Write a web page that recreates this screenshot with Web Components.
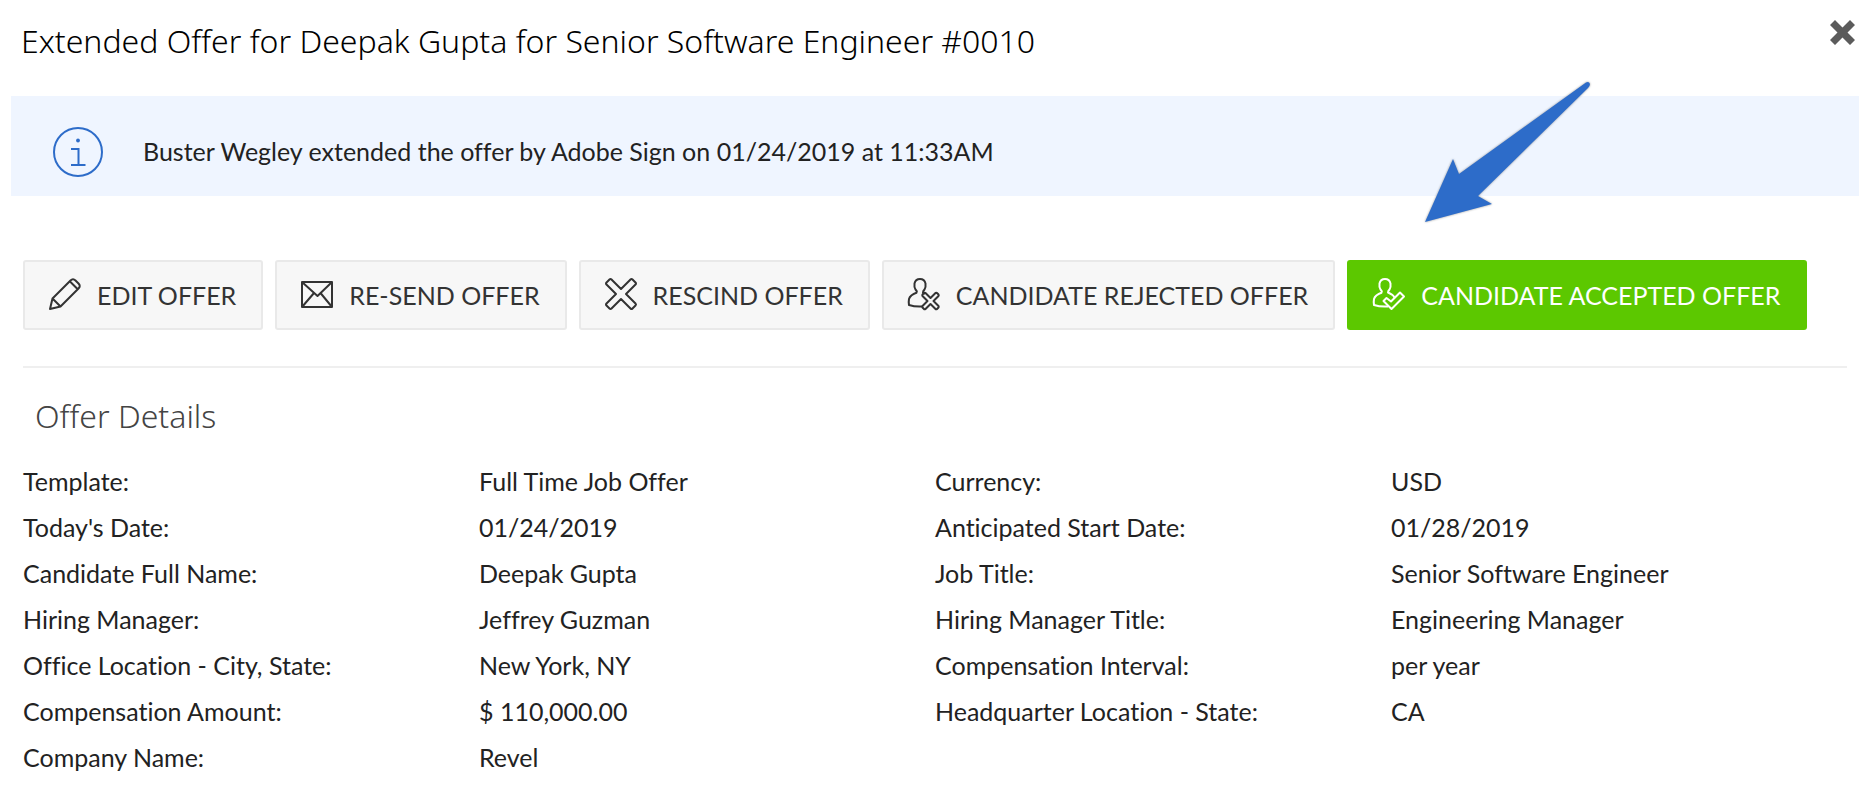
<!DOCTYPE html>
<html lang="en">
<head>
<meta charset="utf-8">
<title>Extended Offer</title>
<style>
  body {
    margin: 0;
    background: #fff;
    color: #222;
    font: 400 25px/46px Lato, "Liberation Sans", sans-serif;
    font-variant-ligatures: none;
  }
</style>
</head>
<body>
<offer-dialog>
  <span slot="title">Extended Offer for Deepak Gupta for Senior Software Engineer #0010</span>
  <info-banner>Buster Wegley extended the offer by Adobe Sign on 01/24/2019 at 11:33AM</info-banner>
  <action-bar>
    <action-button icon="pencil">EDIT OFFER</action-button>
    <action-button icon="envelope">RE-SEND OFFER</action-button>
    <action-button icon="cross">RESCIND OFFER</action-button>
    <action-button icon="person-cross">CANDIDATE REJECTED OFFER</action-button>
    <action-button icon="person-check" primary>CANDIDATE ACCEPTED OFFER</action-button>
  </action-bar>
  <detail-section>
    <span slot="heading">Offer Details</span>
    <detail-field label="Template:">Full Time Job Offer</detail-field>
    <detail-field label="Currency:">USD</detail-field>
    <detail-field label="Today's Date:">01/24/2019</detail-field>
    <detail-field label="Anticipated Start Date:">01/28/2019</detail-field>
    <detail-field label="Candidate Full Name:">Deepak Gupta</detail-field>
    <detail-field label="Job Title:">Senior Software Engineer</detail-field>
    <detail-field label="Hiring Manager:">Jeffrey Guzman</detail-field>
    <detail-field label="Hiring Manager Title:">Engineering Manager</detail-field>
    <detail-field label="Office Location - City, State:">New York, NY</detail-field>
    <detail-field label="Compensation Interval:">per year</detail-field>
    <detail-field label="Compensation Amount:">$ 110,000.00</detail-field>
    <detail-field label="Headquarter Location - State:">CA</detail-field>
    <detail-field label="Company Name:">Revel</detail-field>
  </detail-section>
  <pointer-arrow slot="pointer"></pointer-arrow>
</offer-dialog>

<script>
const define = (name, markup, setup) =>
  customElements.define(name, class extends HTMLElement {
    constructor() {
      super();
      this.attachShadow({ mode: 'open' });
    }
    connectedCallback() {
      this.shadowRoot.innerHTML = markup;
      if (setup) setup(this, this.shadowRoot);
    }
  });

define('offer-dialog', `
  <style>
    :host { display: block; position: relative; }
    header {
      display: flex; justify-content: space-between; align-items: flex-start;
      padding: 17px 13px 31px 21px;
    }
    h1 {
      margin: 0; color: #000;
      font: 300 32px/48px "Noto Sans", "Open Sans", sans-serif;
    }
    button { padding: 0; margin-top: 1px; border: 0; background: none; cursor: pointer; line-height: 0; }
    svg { width: 29px; height: 29px; fill: #5b5b5b; }
  </style>
  <header>
    <h1><slot name="title"></slot></h1>
    <button type="button" aria-label="Close">
      <svg viewBox="0 0 29 29"><path d="M7 2l7.500 7.500L22 2l5 5-7.500 7.500L27 22l-5 5-7.500-7.500L7 27l-5-5 7.500-7.500L2 7z"/></svg>
    </button>
  </header>
  <slot></slot>
  <slot name="pointer"></slot>
`);

define('info-banner', `
  <style>
    :host {
      display: flex; align-items: center; gap: 40px; min-height: 100px;
      margin: 0 11px; padding: 0 42px; box-sizing: border-box;
      background: #eff5ff;
    }
    svg { width: 50px; height: 50px; flex: none; margin-top: 12px; }
    p { margin: 10px 0 0; }
  </style>
  <svg viewBox="0 0 50 50" fill="none" stroke="#2d6cc9" stroke-width="2" aria-hidden="true">
    <circle cx="25" cy="25" r="24"/>
    <path d="M18 22h7.500V38M18 38h14.500"/>
    <circle cx="25" cy="13.500" r="1.900" fill="#2d6cc9" stroke="none"/>
  </svg>
  <p><slot></slot></p>
`);

define('action-bar', `
  <style>
    :host {
      display: flex; flex-wrap: wrap; gap: 12px;
      margin: 64px 23px 0; padding-bottom: 36px;
      border-bottom: 2px solid #efefef;
    }
  </style>
  <slot></slot>
`);

const PERSON = 'M9 14.500Q9 13 7.500 11.500Q6 9 6.500 5.500Q7.500 1 12 1Q16.500 1 17.500 5.500Q18 9 16.500 11.500Q15 13 15 14.500';
const ICONS = {
  pencil: '<path d="M1 31l2.500-10.500L21.500 2.500Q24 0 26.500 2.500L29.500 5.500Q32 8 29.500 10.500L11.500 28.500zM3.500 20.500l8 8M21 3.500l7.500 7.500"/>',
  envelope: '<path d="M1 4h30v25H1zM1 4l15.500 14L31 4M1 29l12-14M31 29L19.500 15"/>',
  cross: '<path d="M1.500 4.500L4.500 1.500Q5.500 .500 6.500 1.500L16 11l9.500-9.500Q26.500 .500 27.500 1.500l3 3Q31.500 5.500 30.500 6.500L21 16l9.500 9.500Q31.500 26.500 30.500 27.500l-3 3Q26.500 31.500 25.500 30.500L16 21l-9.500 9.500Q5.500 31.500 4.500 30.500l-3-3Q.500 26.500 1.500 25.500L11 16 1.500 6.500Q.500 5.500 1.500 4.500z"/>',
  'person-cross': `<path d="${PERSON}L17 16M9 14.500Q2 17 1 21Q.500 23.500 1 27Q7 29 14.500 28.500"/>
    <path d="M17.500 15l5 5 5-5q1-.500 1.500 0l1.500 1.500q.500 1 0 1.500l-5 5 5 5q.500 1 0 1.500L29 31q-1 .500-1.500 0l-5-5-5 5q-1 .500-1.500 0L14.500 29.500q-.500-1 0-1.500l5-5-5-5q-.500-1 0-1.500L16 15q1-.500 1.500 0z"/>`,
  'person-check': `<path d="${PERSON}Q20 16.500 21.500 19.500M9 14.500Q2 17 1 21Q.500 23.500 1 27Q7 29 15 28.500"/>
    <path d="M10.500 23l3-3 4.500 3.500L27 14.500l4 4L18.500 31z"/>`
};

define('action-button', `
  <style>
    :host { display: block; }
    button {
      display: flex; align-items: center; gap: 16px; height: 70px;
      padding: 0 25px 0 24px; box-sizing: border-box;
      border: 2px solid #e9e9e9; border-radius: 3px;
      background: #f7f7f7; color: #333; font: inherit; white-space: nowrap; cursor: pointer;
    }
    :host([primary]) button { background: #5cc800; border-color: #5cc800; color: #fff; }
    svg {
      width: 32px; height: 32px; flex: none; overflow: visible; margin-bottom: 2px;
      fill: none; stroke: currentColor; stroke-width: 2; stroke-linejoin: round;
    }
  </style>
  <button type="button">
    <svg viewBox="0 0 32 32" aria-hidden="true"></svg>
    <span><slot></slot></span>
  </button>
`, (host, root) => {
  root.querySelector('svg').innerHTML = ICONS[host.getAttribute('icon')];
});

define('detail-section', `
  <style>
    :host { display: block; padding: 24px 23px; }
    h2 {
      margin: 0 0 18px; padding-left: 12px; color: #444;
      font: 300 32px/48px "Noto Sans", "Open Sans", sans-serif;
    }
    div { display: grid; grid-template-columns: 1fr 1fr; }
  </style>
  <h2><slot name="heading"></slot></h2>
  <div><slot></slot></div>
`);

define('detail-field', `
  <style>
    :host { display: block; }
    dl { display: grid; grid-template-columns: 1fr 1fr; margin: 0; }
    dd { margin: 0; }
  </style>
  <dl><dt></dt><dd><slot></slot></dd></dl>
`, (host, root) => {
  root.querySelector('dt').textContent = host.getAttribute('label');
});

define('pointer-arrow', `
  <style>
    :host { position: absolute; top: 80px; right: 278px; line-height: 0; pointer-events: none; }
    svg { width: 168px; height: 144px; filter: drop-shadow(0 0 1px #0006); }
  </style>
  <svg viewBox="0 0 168 144" aria-hidden="true">
    <path fill="#2d6cc9" d="M1 142L29 79l6 15L162 2.500Q165 1 166 4Q166 6 164 8L54 116l14 8z"/>
  </svg>
`);
</script>
</body>
</html>
